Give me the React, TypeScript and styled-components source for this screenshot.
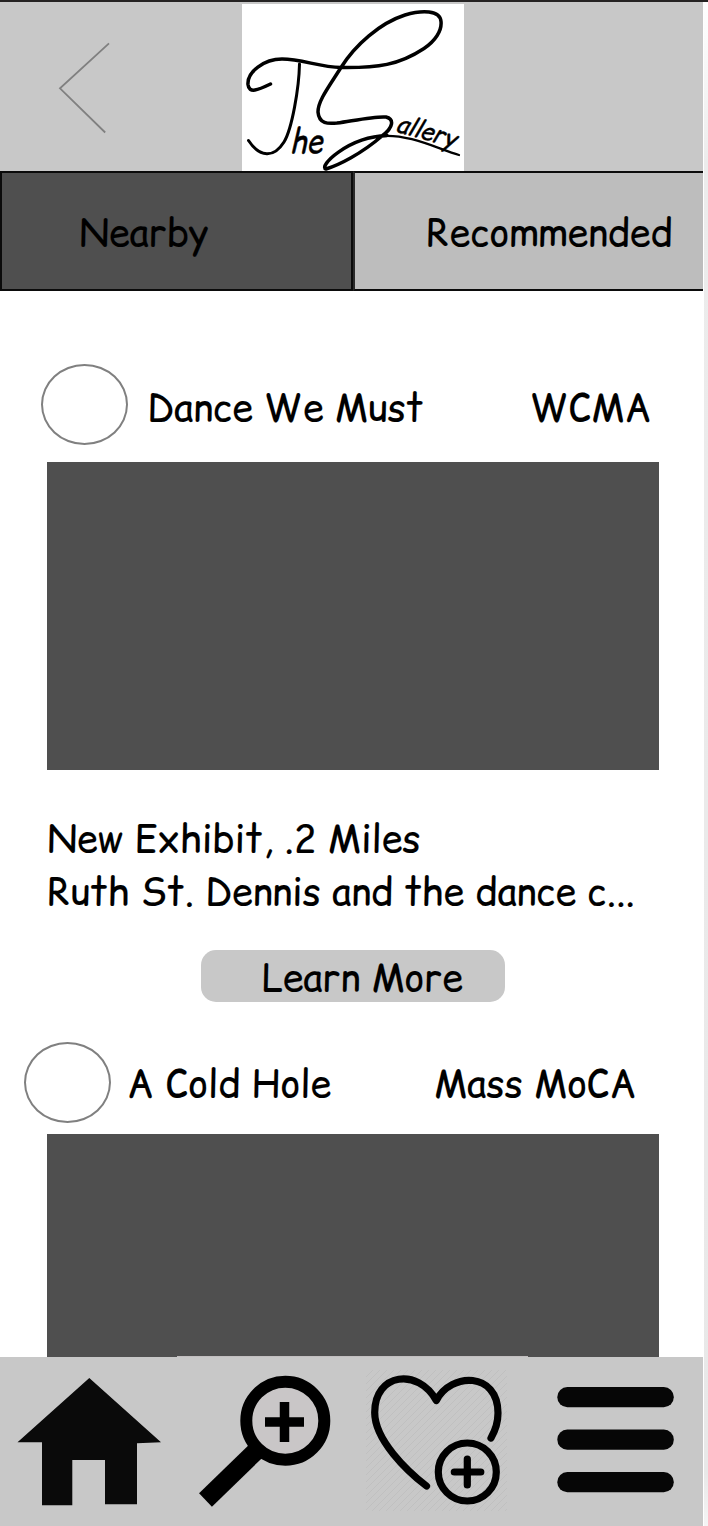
import React from "react";
import styled, { createGlobalStyle } from "styled-components";

const Global = createGlobalStyle`
  *, *::before, *::after { box-sizing: border-box; }
  body { margin: 0; background: #fff; }
  button { font: inherit; color: inherit; border: 0; padding: 0; background: none; }
`;

const Page = styled.div`
  width: 708px;
  height: 1526px;
  display: flex;
  overflow: hidden;
  border-top: 2px solid #252323;
  background: #fff;
  color: #000;
  font: 400 37.55px/53px "Comic Relief", "Comic Sans MS", Lato, sans-serif;
`;

const Screen = styled.div`
  width: 703px;
  height: 100%;
  display: flex;
  flex-direction: column;
`;

const Scrollbar = styled.div`
  width: 4px;
  margin-left: 1px;
  background: linear-gradient(#fff, #ececec 160px, #e8e8e8 1470px, #f5f5f5 1526px);
`;

const Header = styled.header`
  height: 169px;
  flex: none;
  display: flex;
  align-items: flex-end;
  background: #c8c8c8;
`;

const BackButton = styled.button`
  width: 242px;
  height: 169px;
  flex: none;
  svg { display: block; }
`;

const Logo = styled.svg`
  width: 222px;
  height: 167px;
  flex: none;
  display: block;
  background: #fff;
`;

const Tabs = styled.nav`
  height: 120px;
  flex: none;
  display: grid;
  grid-template-columns: 353px 350px;
`;

const Tab = styled.button<{ $active?: boolean; $indent: number }>`
  display: flex;
  align-items: center;
  padding: 3px 0 0 ${(p) => p.$indent}px;
  text-align: left;
  border: 2px solid #0b0b0b;
  border-left-color: ${(p) => (p.$active ? "#0b0b0b" : "#2a2a2a")};
  border-right-width: ${(p) => (p.$active ? 2 : 0)}px;
  background: ${(p) => (p.$active ? "#4f4f4f" : "#bdbdbd")};
`;

const Label = styled.span`
  white-space: pre;
  -webkit-text-stroke: 0.15px #000;
`;

const Feed = styled.main`
  height: 1066px;
  flex: none;
  overflow: hidden;
`;

const CardHeader = styled.div<{ $top: number; $left: number; $right: number; $bottom: number }>`
  display: flex;
  align-items: center;
  padding: ${(p) => `${p.$top}px ${p.$right}px ${p.$bottom}px ${p.$left}px`};
`;

const Avatar = styled.div<{ $gap: number }>`
  width: 87px;
  height: 81px;
  flex: none;
  border: 2px solid #808080;
  border-radius: 50%;
  margin-right: ${(p) => p.$gap}px;
`;

const Title = styled(Label)<{ $drop: number }>`
  padding-top: ${(p) => p.$drop}px;
`;

const Venue = styled(Title)`
  margin-left: auto;
`;

const Picture = styled.div`
  width: 612px;
  height: 308px;
  margin-left: 47px;
  background: #4f4f4f;
`;

const Details = styled.div`
  display: flex;
  flex-direction: column;
  padding: 42px 0 0 47px;
`;

const LearnMore = styled.button`
  display: flex;
  align-items: center;
  width: 304px;
  height: 52px;
  margin: 32px 0 0 201px;
  padding: 3px 0 0 61px;
  border-radius: 15px;
  background: #c8c8c8;
`;

const BottomBar = styled.nav`
  height: 169px;
  flex: none;
  display: grid;
  grid-template-columns: 177px 178px 173px 175px;
  background: #c8c8c8;
`;

const NavButton = styled.button<{ $raised?: boolean }>`
  height: 169px;
  box-shadow: ${(p) => (p.$raised ? "0 -1px 0 #c2bfc0" : "none")};
  svg { display: block; width: 100%; height: 169px; }
`;

export default function App() {
  return (
    <>
      <Global />
      <Page>
        <Screen>
          <Header>
            <BackButton aria-label="Back">
              <svg width="242" height="169" viewBox="0 2 242 169" fill="none" stroke="#808080" strokeWidth="1.8">
                <path d="M109 43.3 60 88.3l45.200 44.200" />
              </svg>
            </BackButton>
            <Logo viewBox="242 4 222 167" fill="none" stroke="#000" strokeWidth="3.500" strokeLinecap="round" strokeLinejoin="round">
              <path d="M270.500 84C258 90 249 94 248 84.500C247 72 264 59 282 59C302 59 319 67 341 67.500C378 68 399 65 424 48.500C435 41 442 31 441 21.500C440 10 422 10 405 15C380 23 355 45 341 67.500C328 88 318 101 318 112C319 124 328 124 337 123C357 120 376 116 386 117C394 119 394 127 382 136C361 154 339 165 326 169C318 167 347 137 387 135.500" />
              <path strokeWidth="2.300" d="M382 136C409 134 436 148 459 155" />
              <path strokeWidth="3" d="M299.500 64C299 88 292 129 284 142C274 158 260 158 248.500 140.500" />
              <g fill="#000" stroke="#000" strokeWidth="0.400" fontFamily='"Comic Relief", "Comic Sans MS", Lato, sans-serif' fontStyle="italic">
                <text x="290" y="153" fontSize="34" textLength="32" lengthAdjust="spacingAndGlyphs">he</text>
                <text transform="translate(395 131) rotate(16)" fontSize="25" textLength="61" lengthAdjust="spacingAndGlyphs">allery</text>
              </g>
            </Logo>
          </Header>
          <Tabs>
            <Tab $active $indent={77}><Label>Nearby</Label></Tab>
            <Tab $indent={71}><Label>Recommended</Label></Tab>
          </Tabs>
          <Feed>
            <CardHeader $top={73} $left={41} $right={51} $bottom={17}>
              <Avatar $gap={19} />
              <Title $drop={6}>Dance We Must</Title>
              <Venue $drop={6}>WCMA</Venue>
            </CardHeader>
            <Picture />
            <Details>
              <Label>New Exhibit, .2 Miles</Label>
              <Label>Ruth St. Dennis and the dance c...</Label>
            </Details>
            <LearnMore><Label>Learn More</Label></LearnMore>
            <CardHeader $top={40} $left={24} $right={66} $bottom={11}>
              <Avatar $gap={16} />
              <Title $drop={2}>A Cold Hole</Title>
              <Venue $drop={2}>Mass MoCA</Venue>
            </CardHeader>
            <Picture />
          </Feed>
          <BottomBar>
            <NavButton aria-label="Home">
              <svg viewBox="0 1357 177 169">
                <path fill="#0a0a0a" d="M89.300 1378 161 1442.300 137 1443.300V1504.300H105V1460H72.300V1505.300H42V1442.300H17.500Z" />
              </svg>
            </NavButton>
            <NavButton $raised aria-label="Search">
              <svg viewBox="177 1357 178 169">
                <path stroke="#000" strokeWidth="18.500" d="M205.500 1500 256 1451" />
                <circle cx="285.300" cy="1420.700" r="39" fill="#c9c6c7" stroke="#000" strokeWidth="12" />
                <path stroke="#000" strokeWidth="9.500" d="M265 1422h39M284.500 1402v40" />
              </svg>
            </NavButton>
            <NavButton $raised aria-label="Add to favorites">
              <svg viewBox="355 1357 173 169" fill="none" stroke="#000" strokeWidth="7.200" strokeLinecap="round" strokeLinejoin="round">
                <defs>
                  <pattern id="hatch" width="7" height="7" patternUnits="userSpaceOnUse">
                    <path d="M-1 8 8-1" stroke="#c0c0c0" strokeWidth="1" />
                  </pattern>
                </defs>
                <path fill="url(#hatch)" stroke="none" d="M366 1370h141v141H366z" />
                <path d="M426.500 1486C407 1471 374.700 1440 374.700 1412.500C374.700 1373 418 1367.500 436.300 1400.500C451 1372 498 1371.500 498 1413C498 1423 495 1431 491 1438" />
                <circle cx="467.300" cy="1472" r="29" />
                <path d="M454.300 1472h26.500M467.300 1459v26" />
              </svg>
            </NavButton>
            <NavButton aria-label="Menu">
              <svg viewBox="528 1357 175 169" fill="#060606">
                <rect x="557.300" y="1387" width="116.500" height="20.300" rx="10" />
                <rect x="557.300" y="1429.500" width="116.500" height="20.300" rx="10" />
                <rect x="557.300" y="1472" width="116.500" height="20.300" rx="10" />
              </svg>
            </NavButton>
          </BottomBar>
        </Screen>
        <Scrollbar />
      </Page>
    </>
  );
}
